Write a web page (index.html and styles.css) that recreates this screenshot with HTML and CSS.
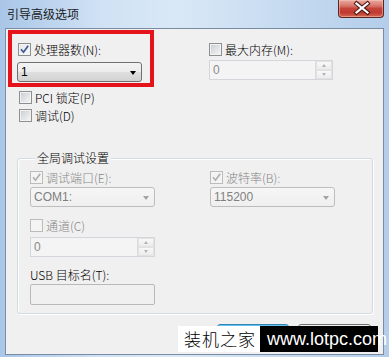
FILE: index.html
```html
<!DOCTYPE html>
<html lang="zh-CN">
<head>
<meta charset="utf-8">
<title>引导高级选项</title>
<link rel="stylesheet" href="styles.css">
</head>
<body>
<div class="window">
  <div class="titlebar">
    <span class="title">引导高级选项</span>
    <div class="close">
      <svg width="46" height="18" viewBox="0 0 46 18">
        <path d="M18.5 4.5 L29.5 13.5 M29.5 4.5 L18.5 13.5" stroke="#4a1a16" stroke-width="4.2" stroke-linecap="square" fill="none"/>
        <path d="M18.5 4.5 L29.5 13.5 M29.5 4.5 L18.5 13.5" stroke="#ffffff" stroke-width="2.2" stroke-linecap="square" fill="none"/>
      </svg>
    </div>
  </div>
  <div class="client">
    <div class="toprow">
      <div class="redbox">
        <div class="chkrow">
          <span class="cb checked"><svg viewBox="0 0 11 11"><path d="M2 5.2 L4.5 8.2 L9.2 1.8" fill="none" stroke="#3b5998" stroke-width="1.7"/></svg></span>
          <span>处理器数(N):</span>
        </div>
        <div class="combo">
          <span class="val">1</span>
          <span class="arrow"></span>
        </div>
      </div>
      <div class="rightcol">
        <div class="chkrow">
          <span class="cb"></span>
          <span>最大内存(M):</span>
        </div>
        <div class="spin top-spin">
          <span class="val">0</span>
          <div class="spinbtns"><span class="up"></span><span class="down"></span></div>
        </div>
      </div>
    </div>
    <div class="chkrow solo first-solo">
      <span class="cb"></span>
      <span>PCI 锁定(P)</span>
    </div>
    <div class="chkrow solo">
      <span class="cb"></span>
      <span>调试(D)</span>
    </div>
    <div class="group">
      <span class="legend">全局调试设置</span>
      <div class="grow">
        <div class="gcol">
          <div class="chkrow dis">
            <span class="cb disabled checked"><svg viewBox="0 0 11 11"><path d="M2 5.2 L4.5 8.2 L9.2 1.8" fill="none" stroke="#b0b0b0" stroke-width="1.7"/></svg></span>
            <span>调试端口(E):</span>
          </div>
          <div class="combo disabled">
            <span class="val">COM1:</span>
            <span class="arrow"></span>
          </div>
        </div>
        <div class="gcol">
          <div class="chkrow dis">
            <span class="cb disabled checked"><svg viewBox="0 0 11 11"><path d="M2 5.2 L4.5 8.2 L9.2 1.8" fill="none" stroke="#b0b0b0" stroke-width="1.7"/></svg></span>
            <span>波特率(B):</span>
          </div>
          <div class="combo disabled">
            <span class="val">115200</span>
            <span class="arrow"></span>
          </div>
        </div>
      </div>
      <div class="chkrow dis chan">
        <span class="cb disabled"></span>
        <span>通道(C)</span>
      </div>
      <div class="spin chan-spin">
        <span class="val">0</span>
        <div class="spinbtns"><span class="up"></span><span class="down"></span></div>
      </div>
      <div class="usblabel">USB 目标名(T):</div>
      <div class="textbox"></div>
    </div>
    <div class="buttons">
      <div class="btn default"></div>
      <div class="btn"></div>
    </div>
    <div class="watermark">
      <span class="wm-cn">装机之家</span>
      <span class="wm-en">www.lotpc.com</span>
    </div>
  </div>
</div>
</body>
</html>
```

FILE: styles.css
```css
html, body {
  margin: 0;
  padding: 0;
}
body {
  width: 389px;
  height: 357px;
  overflow: hidden;
  font-family: "Noto Sans CJK SC", "Liberation Sans", sans-serif;
  font-size: 12px;
  font-weight: 300;
  color: #000;
  background: #b9d1ec;
}
.window {
  box-sizing: border-box;
  width: 389px;
  height: 357px;
  display: flex;
  flex-direction: column;
  padding: 0 5px 2px 5px;
  background: linear-gradient(to right, #a9c6e8 0%, #cfe1f4 25%, #d9e8f6 45%, #c5daf0 75%, #b3cdea 100%);
}
.titlebar {
  height: 28px;
  flex: none;
  display: flex;
  justify-content: space-between;
  align-items: flex-start;
}
.title {
  margin-top: 6px;
  margin-left: 2px;
  line-height: 16px;
  font-size: 12px;
  font-weight: 400;
  color: #1a1a1a;
}
.close {
  width: 46px;
  height: 18px;
  box-sizing: border-box;
  border: 1px solid #5e2520;
  border-top: none;
  border-radius: 0 0 4px 4px;
  background: linear-gradient(#e9aaa0 0%, #d7756a 35%, #c5443a 50%, #c03a30 75%, #d66a55 100%);
  box-shadow: inset 0 0 0 1px rgba(255, 210, 200, 0.45);
}
.close svg {
  display: block;
  margin: -1px 0 0 -1px;
}
.client {
  flex: 1;
  position: relative;
  border: 1px solid #7a8ca3;
  background: #f0f0f0;
}
.toprow {
  display: flex;
  align-items: flex-start;
}
.redbox {
  box-sizing: border-box;
  width: 146px;
  height: 57px;
  margin: 1px 0 0 2px;
  border: 4px solid #e5141b;
  padding: 9px 0 0 6px;
}
.chkrow {
  display: flex;
  align-items: center;
  gap: 3px;
  height: 13px;
  line-height: 13px;
  white-space: nowrap;
}
.cb {
  flex: none;
  box-sizing: border-box;
  width: 13px;
  height: 13px;
  border: 1px solid #8e8f8f;
  background: linear-gradient(135deg, #c6cbd1 0%, #e2e4e7 55%, #f7f7f7 100%);
  box-shadow: inset 0 0 0 1px #f2f2f2;
}
.cb svg {
  display: block;
  width: 11px;
  height: 11px;
}
.cb.checked {
  background: linear-gradient(135deg, #e6e8eb 0%, #f7f7f8 100%);
}
.cb.disabled {
  border-color: #bcbcbc;
  background: #f4f4f4;
  box-shadow: none;
}
.dis {
  color: #878787;
}
.combo {
  box-sizing: border-box;
  width: 125px;
  height: 20px;
  margin: 6px 0 0 -1px;
  border: 1px solid #707070;
  border-radius: 3px;
  background: linear-gradient(#f3f3f3 0%, #ececec 50%, #dfdfdf 51%, #d2d2d2 100%);
  display: flex;
  align-items: center;
  justify-content: space-between;
  padding: 0 5px 0 3px;
}
.val {
  font-family: "Liberation Sans", sans-serif;
  font-size: 12px;
  font-weight: 400;
  line-height: 14px;
}
.arrow {
  width: 0;
  height: 0;
  border-left: 3.5px solid transparent;
  border-right: 3.5px solid transparent;
  border-top: 4px solid #000;
  margin-top: 1px;
}
.combo.disabled {
  margin: 3px 0 0 0;
  border-color: #bdbdbd;
  background: linear-gradient(#f6f6f6, #efefef);
  color: #808080;
}
.combo.disabled .arrow {
  border-top-color: #a4a4a4;
}
.rightcol {
  margin-left: 55px;
  padding-top: 14px;
}
.spin {
  box-sizing: border-box;
  width: 124px;
  height: 20px;
  border: 1px solid #d3d6da;
  background: #f4f4f4;
  display: flex;
  align-items: center;
  justify-content: space-between;
  padding-left: 3px;
  color: #8a8a8a;
}
.top-spin {
  margin-top: 4px;
}
.spinbtns {
  align-self: stretch;
  width: 16px;
  display: flex;
  flex-direction: column;
  border-left: 1px solid #dcdcdc;
}
.spinbtns span {
  flex: 1;
  display: flex;
  align-items: center;
  justify-content: center;
  background: linear-gradient(#f8f8f8, #ececec);
  border: 1px solid #e2e2e2;
}
.spinbtns span::before {
  content: "";
  width: 0;
  height: 0;
  border-left: 2.5px solid transparent;
  border-right: 2.5px solid transparent;
}
.spinbtns .up::before {
  border-bottom: 3px solid #b4b4b4;
}
.spinbtns .down::before {
  border-top: 3px solid #b4b4b4;
}
.solo {
  margin-left: 13px;
  margin-top: 5px;
}
.first-solo {
  margin-top: 4px;
}
.group {
  box-sizing: border-box;
  width: 356px;
  margin: 36px 0 0 11px;
  border: 1px solid #d2dbe2;
  border-radius: 3px;
  box-shadow: 1px 1px 0 #ffffff, inset 1px 1px 0 #ffffff;
  padding: 0 0 8px 12px;
}
.legend {
  display: block;
  width: max-content;
  margin: -8px 0 0 5px;
  padding: 0 2px;
  line-height: 14px;
  background: #f0f0f0;
  color: #000;
}
.grow {
  display: flex;
  gap: 55px;
  margin-top: 6px;
}
.gcol {
  width: 125px;
}
.chan {
  margin-top: 12px;
}
.chan-spin {
  margin-top: 5px;
  width: 125px;
}
.usblabel {
  margin-top: 11px;
  height: 13px;
  line-height: 13px;
}
.textbox {
  box-sizing: border-box;
  width: 125px;
  height: 21px;
  margin-top: 3px;
  border: 1px solid #b9b9b9;
  border-radius: 2px;
  background: #f0f0f0;
}
.buttons {
  display: flex;
  justify-content: flex-end;
  gap: 9px;
  margin-top: 10px;
  padding-right: 12px;
}
.btn {
  box-sizing: border-box;
  width: 72px;
  height: 23px;
  border: 1px solid #707070;
  border-radius: 3px;
  background: linear-gradient(#f2f2f2, #dddddd);
}
.btn + .btn {
  width: 73px;
}
.btn.default {
  border-color: #3c7fb1;
  box-shadow: inset 0 0 0 1px #5fc6f0;
}
.watermark {
  position: absolute;
  left: 172px;
  top: 297px;
  height: 26px;
  display: flex;
}
.wm-cn {
  box-sizing: border-box;
  width: 82px;
  padding-left: 6px;
  background: #ffffff;
  color: #000;
  font-family: "Noto Sans CJK SC", sans-serif;
  font-weight: 300;
  font-size: 17px;
  line-height: 26px;
  letter-spacing: 1px;
  white-space: nowrap;
}
.wm-en {
  box-sizing: border-box;
  width: 118px;
  padding-left: 7px;
  background: #000000;
  color: #ffffff;
  font-family: "Liberation Sans", sans-serif;
  font-size: 18px;
  line-height: 26px;
  white-space: nowrap;
}
```
